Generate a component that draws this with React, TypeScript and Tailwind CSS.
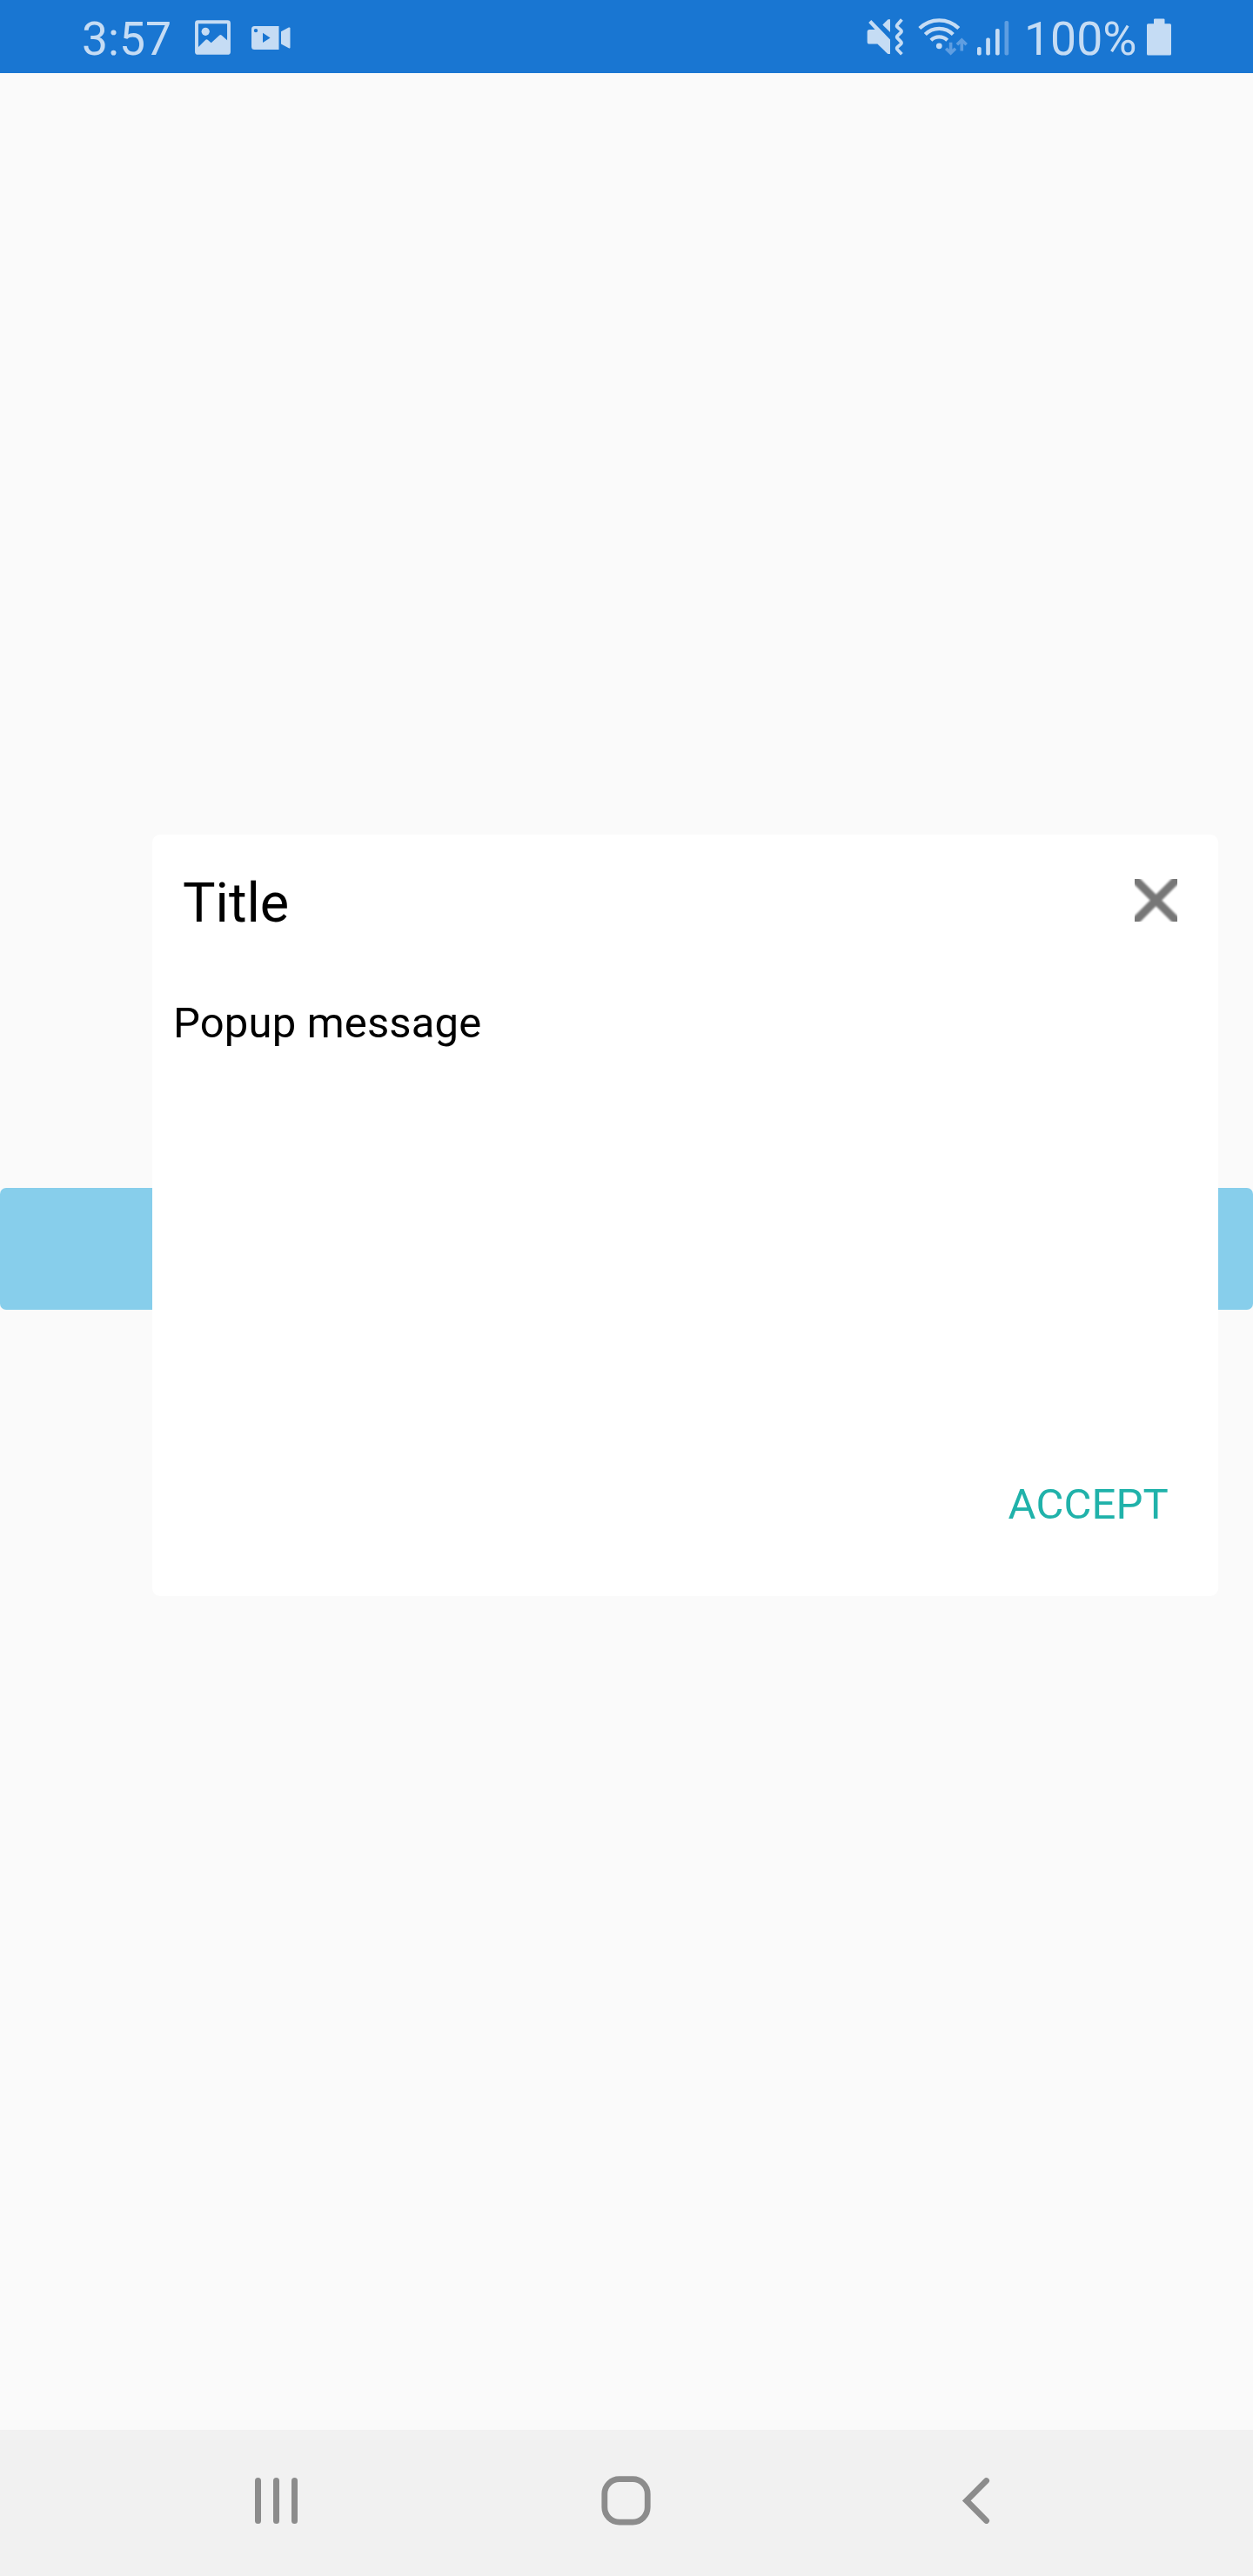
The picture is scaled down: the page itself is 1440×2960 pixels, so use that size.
import React from "react";

const TINT = "#c5dcf4";
const TINT_DIM = "#5f9ee1";

function ImageIcon() {
  return (
    <svg className="ml-[27px] h-[84px] w-[43px] shrink-0" viewBox="223 0 43 84" fill={TINT}>
      <rect x="226" y="25.3" width="37" height="35.6" rx="1.5" fill="none" stroke={TINT} strokeWidth="3.9" />
      <circle cx="236.2" cy="36.3" r="4.6" />
      <path d="M227 55L236.3 45.8Q237.5 44.8 238.7 45.8L242.7 49.3L252.2 40.6Q253.4 39.6 254.6 40.6L262.5 47.5V61H227Z" />
    </svg>
  );
}

function VideoIcon() {
  return (
    <svg className="ml-[22px] h-[84px] w-[47px] shrink-0" viewBox="288 0 47 84" fill={TINT}>
      <path
        fillRule="evenodd"
        d="M292.5 30H320.5V57H292.5Q289 57 289 53.5V33.5Q289 30 292.5 30ZM294 32.9A2.2 2.2 0 1 0 294 37.3A2.2 2.2 0 1 0 294 32.9ZM302 37.8V49L310.6 43.4Z"
      />
      <path d="M323 36.3L331.8 31.6Q333.5 31 333.5 32.6V54.4Q333.5 56 331.8 55.3L323 50.5Z" />
    </svg>
  );
}

function MuteVibrateIcon() {
  return (
    <svg className="h-[84px] w-[44px] shrink-0" viewBox="996 0 44 84" fill={TINT}>
      <path d="M999.2 34H1005.6L998.2 26.1L1001.3 22.9L1023 45.5V62H1020.3L1008.4 50.6H999.2Q996.7 50.6 996.7 48V36.6Q996.7 34 999.2 34Z" />
      <path d="M1014.3 28.6L1020.6 22.2H1023V37Z" />
      <path
        d="M1036.4 22.6L1031.4 28.2Q1030 29.8 1031.4 31.2L1035.3 34.7Q1036.7 36 1035.3 37.4L1031.4 41.2Q1030 42.5 1031.4 43.9L1035.3 47.9Q1036.7 49.2 1035.3 50.6L1031.4 54.2Q1030 55.6 1031.4 57L1036.4 62.2"
        fill="none"
        stroke={TINT}
        strokeWidth="3.8"
      />
    </svg>
  );
}

function WifiIcon() {
  return (
    <svg className="ml-[14px] h-[84px] w-[60px] shrink-0" viewBox="1054 0 60 84" fill="none">
      <g stroke={TINT} strokeWidth="4.2">
        <path d="M1056.8 32.6A32 32 0 0 1 1101.8 32.6" />
        <path d="M1063.3 39.6A22.5 22.5 0 0 1 1095.3 39.6" />
        <path d="M1069.9 46.2A13.3 13.3 0 0 1 1088.7 46.2" />
      </g>
      <circle cx="1079.3" cy="52.8" r="3.4" fill={TINT} />
      <g stroke={TINT_DIM} strokeWidth="3.6">
        <path d="M1092.6 48.8V60M1087.2 55.7L1092.6 61L1098 55.7" />
        <path d="M1105.3 58.6V47M1099.9 51.2L1105.3 45.9L1110.7 51.2" />
      </g>
    </svg>
  );
}

function SignalIcon() {
  return (
    <svg className="ml-[8px] h-[84px] w-[38px] shrink-0" viewBox="1122 0 38 84" fill={TINT}>
      <rect x="1123" y="54" width="4.7" height="9.5" rx="1.8" />
      <rect x="1133.2" y="43.6" width="4.7" height="19.9" rx="1.8" />
      <rect x="1144" y="33" width="4.7" height="30.5" rx="1.8" />
      <rect x="1154.5" y="24" width="4.7" height="39.5" rx="1.8" fill={TINT_DIM} />
    </svg>
  );
}

function BatteryIcon() {
  return (
    <svg className="ml-[10px] h-[84px] w-[30px] shrink-0" viewBox="1317 0 30 84" fill={TINT}>
      <path d="M1326 27.2V22.6Q1326 21.4 1327.2 21.4H1337.3Q1338.5 21.4 1338.5 22.6V27.2H1344.5Q1346 27.2 1346 28.7V62.1Q1346 63.6 1344.5 63.6H1319.5Q1318 63.6 1318 62.1V28.7Q1318 27.2 1319.5 27.2Z" />
    </svg>
  );
}

function StatusBar() {
  return (
    <header className="flex h-[84px] shrink-0 items-center justify-between bg-[#1976d2] pr-[93px] pl-[94px] text-[53.5px] leading-[84px] text-[#c5dcf4]">
      <div className="flex items-center">
        <span className="w-[102px] pt-[5px] whitespace-nowrap">3:57</span>
        <ImageIcon />
        <VideoIcon />
      </div>
      <div className="flex items-center">
        <MuteVibrateIcon />
        <WifiIcon />
        <SignalIcon />
        <span className="ml-[17px] w-[130px] pt-[5px] whitespace-nowrap">100%</span>
        <BatteryIcon />
      </div>
    </header>
  );
}

function Popup() {
  return (
    <section className="absolute top-[875px] left-[175px] flex h-[875px] w-[1225px] flex-col rounded-[9px] bg-white">
      <div className="flex items-start justify-between pt-[41px] pr-[47px] pl-[35px]">
        <h1 className="text-[63px] leading-[75px]">Title</h1>
        <button aria-label="Close" className="mt-[10px] size-[49px] overflow-hidden">
          <svg className="block size-[49px]" viewBox="0 0 49 49">
            <path
              className="blur-[1.2px]"
              d="M-4 -4L53 53M53 -4L-4 53"
              stroke="#777777"
              strokeWidth="9.5"
            />
          </svg>
        </button>
      </div>
      <p className="mt-[72px] pl-[24px] text-[49px] leading-[57px] tracking-[0.15px]">Popup message</p>
      <div className="mt-auto flex justify-end pr-[57px] pb-[77px]">
        <button className="text-[49px] leading-[57px] tracking-[0.15px] text-[#20b2aa]">ACCEPT</button>
      </div>
    </section>
  );
}

function NavBar() {
  return (
    <nav className="flex h-[168px] shrink-0 items-start bg-[#f1f1f1] pt-[52px] pl-[293px]">
      <button aria-label="Recents" className="mt-[3px] flex gap-[14px]">
        <span className="h-[53px] w-[7px] rounded-full bg-[#8c8c8c]" />
        <span className="h-[53px] w-[7px] rounded-full bg-[#8c8c8c]" />
        <span className="h-[53px] w-[7px] rounded-full bg-[#8c8c8c]" />
      </button>
      <button aria-label="Home" className="ml-[348px]">
        <svg className="block size-[60px]" viewBox="0 0 60 60">
          <rect x="4.8" y="4.7" width="49.4" height="49.4" rx="17" fill="none" stroke="#8c8c8c" strokeWidth="6.8" />
        </svg>
      </button>
      <button aria-label="Back" className="ml-[355px]">
        <svg className="block h-[60px] w-[34px]" viewBox="0 0 34 60">
          <path d="M28.5 6.6L5.8 29.4L28.5 52.4" fill="none" stroke="#8c8c8c" strokeWidth="7" strokeLinecap="round" />
        </svg>
      </button>
    </nav>
  );
}

export default function App() {
  return (
    <div className="flex h-[2960px] w-[1440px] flex-col overflow-hidden bg-[#fafafa] font-['Roboto',sans-serif] text-black">
      <StatusBar />
      <main className="relative flex-1 pt-[1281px]">
        <div className="h-[140px] rounded-[7px] bg-[#87ceeb]" />
        <Popup />
      </main>
      <NavBar />
    </div>
  );
}
